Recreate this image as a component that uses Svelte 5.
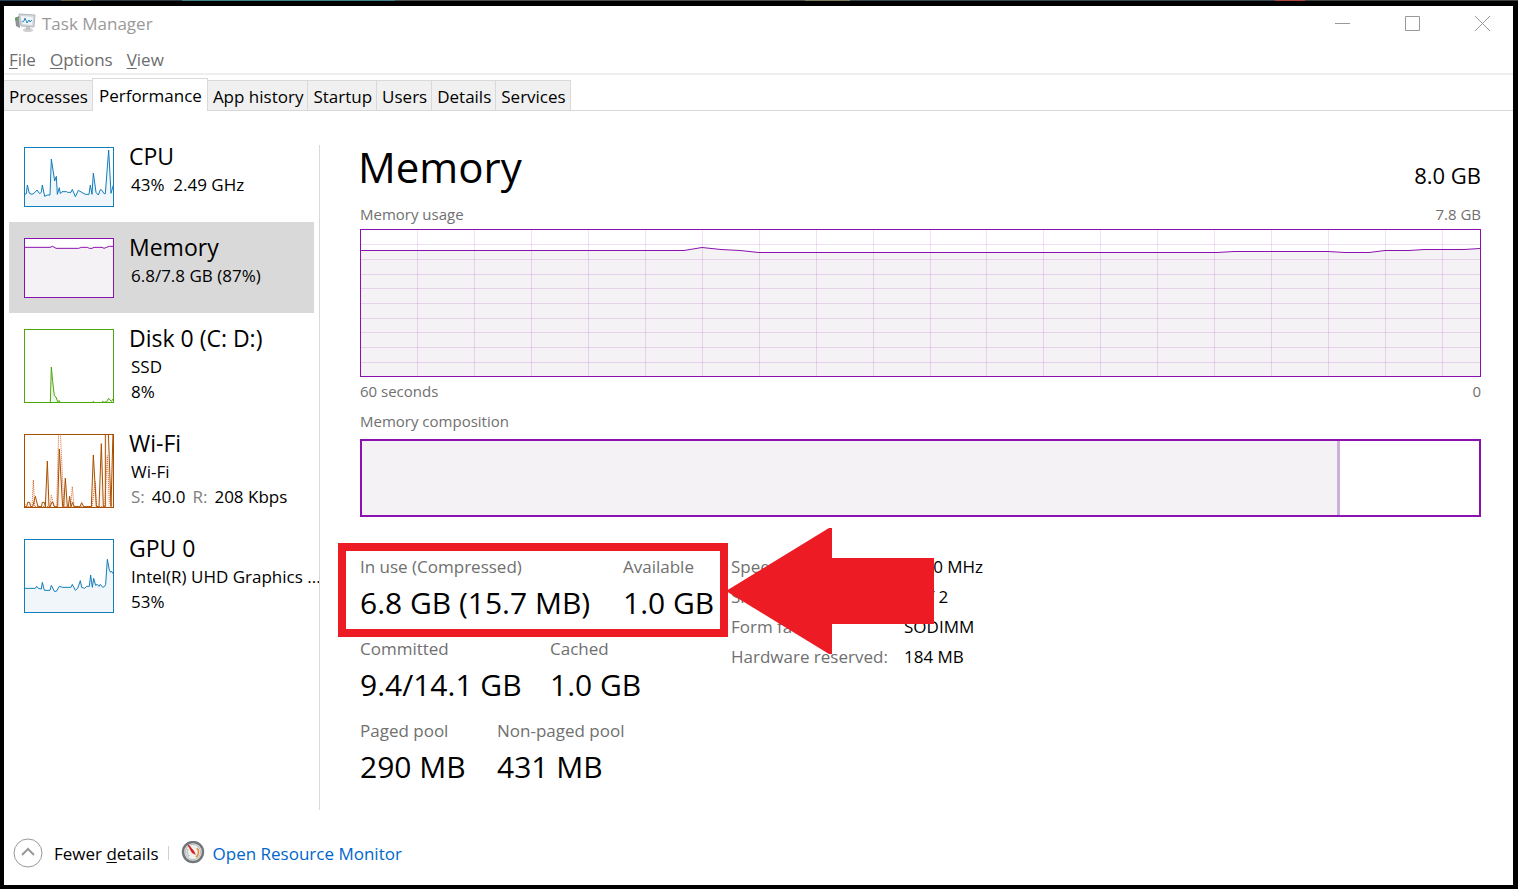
<script>
  const tabs = ["Processes", "Performance", "App history", "Startup", "Users", "Details", "Services"];
  let activeTab = "Performance";

  const devices = [
    {
      id: "cpu",
      name: "CPU",
      lines: ["43%  2.49 GHz"],
      viewBox: "75 39 264 174",
      points:
        "75,178 79,176 82,150 88,175 96,178 104,173 111,165 119,176 124,172 127,150 134,184 142,180 150,180 154,72 164,138 169,124 172,178 178,158 181,176 186,170 200,170 203,172 213,172 217,163 226,185 235,166 252,176 256,178 267,178 271,150 276,178 280,114 288,172 295,180 301,164 306,166 312,176 316,176 326,45 333,175 340,150",
    },
    {
      id: "memory",
      name: "Memory",
      lines: ["6.8/7.8 GB (87%)"],
      viewBox: "75 312 264 174",
      points:
        "75,337 150,337 158,334 168,340 236,340 244,337 262,337 268,340 276,340 282,337 306,337 312,340 320,337 328,334 339,334",
    },
    {
      id: "disk",
      name: "Disk 0 (C: D:)",
      lines: ["SSD", "8%"],
      viewBox: "75 45 264 216",
      points:
        "75,264 151,264 154,156 158,200 163,242 168,246 173,260 178,257 182,264 276,264 280,259 285,264 304,264 308,259 312,262 320,260 326,250 334,259 339,252",
    },
    {
      id: "wifi",
      name: "Wi-Fi",
      lines: ["Wi-Fi"],
      viewBox: "75 360 264 216",
      points:
        "75,575 80,575 83,562 89,562 92,575 98,575 106,544 114,575 124,575 127,562 133,562 136,575 142,438 147,575 151,575 155,562 159,562 163,575 173,575 178,402 188,575 191,575 196,489 202,575 205,575 209,544 213,575 218,562 222,575 240,575 245,563 251,575 274,575 280,420 289,575 297,575 304,386 310,575 316,575 316,350 325,350 333,575 339,350",
      dotted:
        "75,568 80,575 96,575 100,495 104,575 150,575 154,541 162,575 170,575 176,350 181,350 188,500 192,575 212,575 217,515 222,575 276,575 286,500 290,575 314,575 322,422 328,560 334,575",
    },
    {
      id: "gpu",
      name: "GPU 0",
      lines: ["Intel(R) UHD Graphics ...", "53%"],
      viewBox: "75 45 264 216",
      points:
        "75,190 106,190 110,184 115,190 124,192 127,172 133,196 150,196 154,181 163,199 169,199 178,184 188,187 213,187 217,178 226,196 233,190 241,167 245,187 254,190 260,184 268,184 272,150 277,187 281,160 287,181 292,178 297,184 301,178 308,187 314,184 317,178 322,103 328,135 332,142 335,139 339,146",
    },
  ];
  let selected = "memory";

  const usage =
    "0,20.5 323,20.5 341,17.5 360,19.5 379,20.5 398,22.5 856,22.5 873,21.5 967,21.5 984,22.5 1008,22.5 1024,20.5 1048,20.5 1063,19.5 1103,19.5 1119,18.5";
  const gridX = Array.from({ length: 19 }, (_, i) => Math.floor(56.9 * (i + 1)) + 0.5);
  const gridY = [14.5, 29.5, 44.5, 58.5, 73.5, 88.5, 102.5, 117.5, 132.5];
  const usedShare = 87.6;

  const stats = [
    [
      { label: "In use (Compressed)", value: "6.8 GB (15.7 MB)", size: "wide" },
      { label: "Available", value: "1.0 GB" },
    ],
    [
      { label: "Committed", value: "9.4/14.1 GB", size: "medium" },
      { label: "Cached", value: "1.0 GB" },
    ],
    [
      { label: "Paged pool", value: "290 MB", size: "narrow" },
      { label: "Non-paged pool", value: "431 MB" },
    ],
  ];

  const hardware = [
    ["Speed:", "2400 MHz"],
    ["Slots used:", "1 of 2"],
    ["Form factor:", "SODIMM"],
    ["Hardware reserved:", "184 MB"],
  ];
</script>

<div class="desktop"></div>
<div class="window">
  <header class="titlebar">
    <svg class="app-icon" width="21" height="20" viewBox="0 0 21 20">
      <path d="M0 5 L4 3 L5 15 L1 13Z" fill="#8d9296" />
      <path d="M0 5 L2 4 L2 7 L0 7Z" fill="#3fae49" />
      <path d="M4 1 L20 2 L19 14 L6 13Z" fill="#d4d7da" stroke="#b4b8bb" />
      <path d="M6 3 L18 4 L17 12 L7 11Z" fill="#eef6fb" />
      <path d="M7 9 L9 8 L10 5 L12 10 L14 7 L15 9 L17 7" fill="none" stroke="#2a86bd" />
      <ellipse cx="13" cy="17" rx="5" ry="2" fill="#cfd1d3" />
      <path d="M11 14 H15 V17 H11Z" fill="#c0c3c5" />
    </svg>
    <span class="title">Task Manager</span>
    <div class="controls">
      <button aria-label="Minimize">
        <svg width="17" height="17"><path d="M1 8.5H16" /></svg>
      </button>
      <button aria-label="Maximize">
        <svg width="17" height="17"><path d="M1.5 1.5H15.5V15.5H1.5Z" /></svg>
      </button>
      <button aria-label="Close">
        <svg width="17" height="17"><path d="M1 1L16 16M16 1L1 16" /></svg>
      </button>
    </div>
  </header>

  <nav class="menu">
    <button><u>F</u>ile</button>
    <button><u>O</u>ptions</button>
    <button><u>V</u>iew</button>
  </nav>

  <div class="tabs" role="tablist">
    {#each tabs as tab}
      <button
        role="tab"
        class:active={tab === activeTab}
        aria-selected={tab === activeTab}
        on:click={() => (activeTab = tab)}>{tab}</button
      >
    {/each}
  </div>

  <div class="content">
    <aside>
      {#each devices as device}
        <button
          class="device {device.id}"
          class:selected={device.id === selected}
          on:click={() => (selected = device.id)}
        >
          <svg class="thumb" viewBox={device.viewBox} preserveAspectRatio="none">
            <polygon points="{device.points} 339,600 75,600" />
            {#if device.dotted}
              <polyline class="dotted" points={device.dotted} />
            {/if}
            <polyline points={device.points} />
          </svg>
          <span class="info">
            <span class="name">{device.name}</span>
            {#each device.lines as line}
              <span class="line">{line}</span>
            {/each}
            {#if device.id === "wifi"}
              <span class="line rates"><i>S:</i><span>40.0</span><i>R:</i><span>208 Kbps</span></span>
            {/if}
          </span>
        </button>
      {/each}
    </aside>

    <main>
      <div class="heading">
        <h1>Memory</h1>
        <span class="total">8.0 GB</span>
      </div>

      <div class="caption"><span>Memory usage</span><span>7.8 GB</span></div>
      <svg class="chart" viewBox="0 0 1119 146" preserveAspectRatio="none">
        <polygon points="{usage} 1119,146 0,146" />
        <g class="grid">
          {#each gridX as x}
            <line x1={x} x2={x} y1="0" y2="146" />
          {/each}
          {#each gridY as y}
            <line x1="0" x2="1119" y1={y} y2={y} />
          {/each}
        </g>
        <polyline points={usage} />
      </svg>
      <div class="caption"><span>60 seconds</span><span>0</span></div>

      <div class="caption below">Memory composition</div>
      <div class="composition"><div class="used" style="width: {usedShare}%"></div></div>

      <div class="details">
        <div class="stats">
          {#each stats as row}
            <div class="stat-row">
              {#each row as stat}
                <div class="stat {stat.size ?? ''}">
                  <span class="label">{stat.label}</span>
                  <span class="value">{stat.value}</span>
                </div>
              {/each}
            </div>
          {/each}
        </div>
        <table>
          <tbody>
            {#each hardware as [label, value]}
              <tr><th scope="row">{label}</th><td>{value}</td></tr>
            {/each}
          </tbody>
        </table>
        <div class="highlight"></div>
        <svg class="arrow" width="208" height="128" viewBox="0 0 208 128">
          <path d="M0 63 L103 0 H106 V30 H208 V96 H106 V126 H103Z" />
        </svg>
      </div>
    </main>
  </div>

  <footer>
    <button class="fewer">
      <svg width="30" height="30" viewBox="0 0 30 30">
        <circle cx="15" cy="15" r="14" />
        <path d="M9 17 L15 11 L21 17" />
      </svg>
      <span>Fewer <u>d</u>etails</span>
    </button>
    <span class="separator"></span>
    <a href="#resmon">
      <svg width="24" height="24" viewBox="0 0 24 24">
        <circle cx="12" cy="11" r="10" fill="#e4e4e2" stroke="#70777a" stroke-width="2.4" />
        <circle cx="12" cy="11" r="7.6" fill="#efefed" stroke="#b9bcbc" />
        <path d="M16 7 A6 6 0 0 1 15 16" fill="none" stroke="#e58a3c" stroke-width="1.6" />
        <path d="M8 15 A6 6 0 0 1 7 8" fill="none" stroke="#9aa0a2" stroke-width="1.4" stroke-dasharray="1 1" />
        <path d="M6 3 L8 4 L13 10 L15 14 L11 12Z" fill="#d3201c" />
      </svg>
      <span>Open Resource Monitor</span>
    </a>
  </footer>
</div>

<style>
  :global(body) {
    margin: 0;
    font-family: "Open Sans", "Noto Sans", sans-serif;
    font-size: 17px;
    color: #000;
  }

  .desktop {
    height: 1px;
    background: linear-gradient(
      90deg,
      #24405c 0 4%,
      #6b6440 4% 6%,
      #2c3a46 6% 12%,
      #3f7f86 12% 26%,
      #4a4f4c 26% 53%,
      #7d7a5c 53% 56%,
      #36474d 56% 84%,
      #a8463c 84% 86%,
      #3d4342 86%
    );
  }

  .window {
    display: flex;
    flex-direction: column;
    box-sizing: border-box;
    min-height: calc(100vh - 1px);
    border: solid #000;
    border-width: 5px 5px 4px 4px;
    background: #fff;
  }

  button {
    font: inherit;
    color: inherit;
    border: 0;
    padding: 0;
    background: none;
  }

  u {
    text-underline-offset: 2px;
    text-decoration-thickness: 1px;
  }

  .titlebar {
    display: flex;
    align-items: center;
    height: 34px;
    padding-left: 11px;
    gap: 6px;
    color: #999;
  }

  .controls {
    display: flex;
    gap: 8px;
    margin-left: auto;
  }

  .controls button {
    display: flex;
    justify-content: center;
    align-items: center;
    width: 62px;
    height: 34px;
  }

  .controls path {
    fill: none;
    stroke: #999;
  }

  .menu {
    display: flex;
    align-items: center;
    gap: 14px;
    height: 27px;
    padding: 6px 5px 0;
    border-bottom: 2px solid #eee;
    color: #6d6d6d;
  }

  .tabs {
    display: flex;
    align-items: flex-end;
    height: 35px;
    border-bottom: 1px solid #d9d9d9;
  }

  .tabs button {
    height: 30px;
    padding: 2px 4px 0 5px;
    background: #f0f0f0;
    border: solid #d9d9d9;
    border-width: 1px 1px 0 0;
  }

  .tabs .active {
    height: 33px;
    margin: 0 0 -1px -1px;
    padding: 0 5px 0 6px;
    border-left-width: 1px;
    background: #fff;
  }

  .content {
    display: flex;
    flex: 1;
    padding: 20px 32px 0 5px;
  }

  aside {
    display: flex;
    flex-direction: column;
    flex: none;
    width: 305px;
  }

  .device {
    display: flex;
    gap: 15px;
    padding: 9px 0 0 15px;
    height: 105px;
    text-align: left;
  }

  .device.cpu,
  .device.memory {
    height: 91px;
  }

  .selected {
    background: #d9d9d9;
  }

  .thumb {
    flex: none;
    box-sizing: border-box;
    width: 90px;
    height: 74px;
    margin-top: 7px;
    border: 1px solid var(--line);
    background: #fff;
  }

  .cpu .thumb,
  .memory .thumb {
    height: 60px;
  }

  .cpu,
  .gpu {
    --line: #117dbb;
    --fill: #f1f6fa;
  }

  .memory,
  main {
    --line: #8b12ae;
    --fill: #f4f2f4;
  }

  .disk {
    --line: #4da60c;
    --fill: #eff7e9;
  }

  .wifi {
    --line: #a74f01;
    --fill: #fcf3eb;
  }

  polygon {
    fill: var(--fill);
  }

  polyline {
    fill: none;
    stroke: var(--line);
    vector-effect: non-scaling-stroke;
  }

  .dotted {
    stroke: #d9622b;
    stroke-dasharray: 1 1;
  }

  .info {
    display: flex;
    flex-direction: column;
    white-space: pre;
  }

  .name {
    font-size: 23px;
    line-height: 32px;
  }

  .line {
    padding-left: 2px;
    line-height: 25px;
  }

  .rates {
    display: flex;
    gap: 7px;
  }

  i {
    font-style: normal;
    color: #808080;
  }

  main {
    flex: 1;
    margin: 14px 0 11px 5px;
    padding-left: 40px;
    border-left: 1px solid #d9d9d9;
  }

  .heading {
    display: flex;
    justify-content: space-between;
    align-items: center;
    height: 55px;
  }

  h1 {
    margin: -12px 0 0 -2px;
    font-size: 42px;
    font-weight: 400;
  }

  .total {
    padding-top: 4px;
    font-size: 22px;
  }

  .caption {
    display: flex;
    justify-content: space-between;
    font-size: 15px;
    line-height: 28px;
    color: #707070;
  }

  .below {
    margin-top: 2px;
  }

  .chart {
    display: block;
    box-sizing: border-box;
    width: 100%;
    height: 148px;
    margin-top: 1px;
    border: 1px solid var(--line);
  }

  .grid line {
    stroke: var(--line);
    stroke-opacity: 0.14;
    vector-effect: non-scaling-stroke;
  }

  .composition {
    box-sizing: border-box;
    height: 78px;
    margin-top: 4px;
    border: 2px solid var(--line);
  }

  .used {
    box-sizing: border-box;
    height: 100%;
    background: var(--fill);
    border-right: 3px solid #ceaedb;
  }

  .details {
    position: relative;
    display: flex;
    align-items: flex-start;
    padding-top: 36px;
  }

  .stats {
    flex: none;
    width: 371px;
  }

  .stat-row {
    display: flex;
    height: 82px;
  }

  .stat {
    display: flex;
    flex-direction: column;
    white-space: nowrap;
  }

  .wide {
    width: 263px;
  }

  .medium {
    width: 190px;
  }

  .narrow {
    width: 137px;
  }

  .label {
    line-height: 28px;
    color: #707070;
  }

  .value {
    font-size: 30px;
    line-height: 44px;
  }

  table {
    margin-top: -1px;
    border-collapse: collapse;
    line-height: 30px;
    text-align: left;
  }

  th {
    width: 173px;
    padding: 0;
    font-weight: 400;
    color: #707070;
  }

  td {
    padding: 0;
  }

  .highlight {
    position: absolute;
    left: -22px;
    top: 26px;
    width: 374px;
    height: 78px;
    border: 8px solid #ed1c24;
  }

  .arrow {
    position: absolute;
    left: 366px;
    top: 11px;
    fill: #ed1c24;
  }

  footer {
    display: flex;
    align-items: center;
    height: 64px;
    padding: 0 9px;
  }

  .fewer,
  footer a {
    display: flex;
    align-items: center;
  }

  .fewer {
    gap: 11px;
  }

  .fewer svg {
    fill: none;
    stroke: #999;
  }

  .fewer path {
    stroke-width: 2;
  }

  .separator {
    width: 1px;
    height: 14px;
    margin: 0 12px 0 9px;
    background: #d0d0d0;
  }

  footer a {
    gap: 8px;
    color: #0066cc;
    text-decoration: none;
  }
</style>
